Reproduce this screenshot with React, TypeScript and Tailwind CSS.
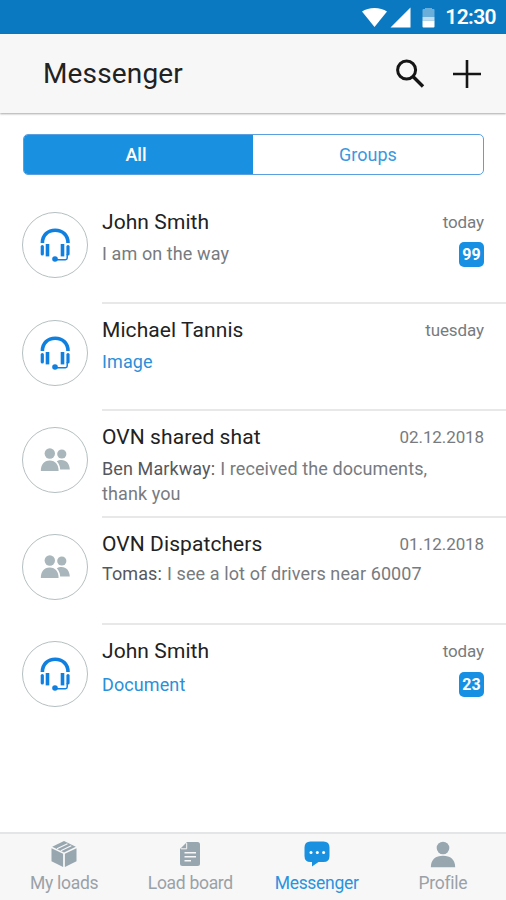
import clsx from "clsx";
import type { ReactNode } from "react";

interface IChat {
    name: string;
    date: string;
    sender?: string;
    text: string;
    text2?: string;
    link?: boolean;
    unread?: number;
    group?: boolean;
    textClass: string;
}

const chats: IChat[] = [
    { name: "John Smith", date: "today", text: "I am on the way", unread: 99, textClass: "mt-[5px]" },
    { name: "Michael Tannis", date: "tuesday", text: "Image", link: true, textClass: "mt-[5px]" },
    { name: "OVN shared shat", date: "02.12.2018", sender: "Ben Markway:", text: "I received the documents,", text2: "thank you", group: true, textClass: "mt-[5px]" },
    { name: "OVN Dispatchers", date: "01.12.2018", sender: "Tomas:", text: "I see a lot of drivers near 60007", group: true, textClass: "mt-[3px]" },
    { name: "John Smith", date: "today", text: "Document", link: true, unread: 23, textClass: "mt-[7px]" },
];

const HeadsetIcon = () => (
    <svg width="30" height="34" viewBox="0 0 30 34" fill="none" stroke="#0f7fe0">
        <path d="M2.400 15C2.400 7 8 2.300 15.200 2.300S28 7 28 15" strokeWidth="3.600" />
        <path d="M2.300 18.500v7.500" strokeWidth="3.200" strokeLinecap="round" />
        <path d="M7.500 16v12.400" strokeWidth="3.600" />
        <path d="M22.500 16v12.400" strokeWidth="3.600" />
        <path d="M28 18.500v7.500" strokeWidth="3.200" strokeLinecap="round" />
        <path d="M27.200 26v4q0 1.700-1.700 1.700H15" strokeWidth="1.500" />
        <circle cx="15" cy="31" r="2.800" fill="#0f7fe0" stroke="none" />
    </svg>
);

const GroupIcon = () => (
    <svg width="30" height="24" viewBox="0 0 30 24" fill="#a9b6bb">
        <circle cx="9.800" cy="5.500" r="5.200" />
        <circle cx="21.800" cy="6" r="4.600" />
        <path d="M.8 23c0-6 3-10.400 8.900-10.400S18.600 17 18.600 23z" />
        <path d="M16.800 13.300c1.300-.9 3-1.300 4.700-1.300 4.800 0 8.200 3.800 8.300 9.600h-9.600c-.2-3.400-1.300-6.200-3.400-8.300z" />
    </svg>
);

const SearchIcon = () => (
    <svg width="30" height="30" viewBox="0 0 30 30" fill="none" stroke="#151515">
        <circle cx="11.600" cy="11" r="9" strokeWidth="3" />
        <path d="M18 17.500l10 10" strokeWidth="3.400" />
    </svg>
);

const BoxIcon = () => (
    <svg width="26" height="28" viewBox="0 0 26 28" fill="#98a6b0">
        <path d="M13 1l11.800 5.800L13 12.500 1.200 6.800z" />
        <path d="M.5 8.300l11.600 5.500V27L.5 21.300z" />
        <path d="M25.500 8.300l-11.600 5.500V27l11.600-5.700z" />
        <path d="M6 8.700l10.500-5M9.800 10.700l10.500-5" stroke="#f7f7f7" strokeWidth="1.200" />
    </svg>
);

const DocIcon = () => (
    <svg width="22" height="26" viewBox="0 0 22 26" fill="#98a6b0">
        <path d="M8 1h10.500Q21 1 21 3.500v19q0 2.500-2.500 2.500h-15Q1 25 1 22.500V8z" />
        <path d="M7.700 2v5.800H2" fill="none" stroke="#f7f7f7" strokeWidth="1" />
        <path d="M5.500 11.700H17M5.500 15.700H17M5.500 19.800h6.500" stroke="#f7f7f7" strokeWidth="1.500" />
    </svg>
);

const BubbleIcon = () => (
    <svg width="26" height="26" viewBox="0 0 26 26" fill="#1a91e0">
        <path d="M6.500.500h13q6 0 6 6v8.500q0 6-6 6h-5L8 25.500V21H6.500q-6 0-6-6V6.500q0-6 6-6z" />
        <g fill="#fff">
            <circle cx="7" cy="11.500" r="1.500" />
            <circle cx="13.300" cy="11.500" r="1.500" />
            <circle cx="19.600" cy="11.500" r="1.500" />
        </g>
    </svg>
);

const ProfileIcon = () => (
    <svg width="26" height="27" viewBox="0 0 26 27" fill="#98a6b0">
        <circle cx="13" cy="7" r="6.300" />
        <path d="M.8 26.200C1 18.500 5.500 14.800 13 14.800s12 3.700 12.200 11.400z" />
    </svg>
);

const StatusBar = () => (
    <div className="flex h-[34px] items-center justify-end bg-[#0b79c1] pr-[10px] text-white">
        <svg width="78" height="22" viewBox="0 0 78 22" fill="#fff">
            <path d="M0 5.500C6.500.800 18.500.800 25 5.500L12.500 21z" />
            <path d="M48.500 1.500V21.500H28.500z" />
            <path d="M60.500 4q0-1 1-1h1.500V2h7v1h1.500q1 0 1 1v7h-12z" opacity=".4" />
            <path d="M60.500 11h12v3.500h-12z" opacity=".75" />
            <path d="M60.500 14.500h12V20.500q0 1-1 1h-10q-1 0-1-1z" />
        </svg>
        <span className="ml-[5px] text-[21px] leading-none font-semibold tracking-[-0.600px]">12:30</span>
    </div>
);

const ChatRow = ({ chat, first, last }: { chat: IChat; first: boolean; last: boolean }) => (
    <div className={clsx("flex pl-[22px]", first ? "h-[108px]" : "h-[107px]")}>
        <div className="mt-4 flex size-[66px] shrink-0 items-center justify-center rounded-full border-[1.500px] border-[#b6bfc1]">
            {chat.group ? <GroupIcon /> : <HeadsetIcon />}
        </div>
        <div className={clsx("ml-[14px] flex flex-1 justify-between pt-[13px] pr-[22px]", !last && "border-b-2 border-[#e8e8e8]")}>
            <div className="w-[345px]">
                <h2 className="text-[21px] leading-[27px] tracking-[0.080px] whitespace-nowrap text-[#222]">{chat.name}</h2>
                <div className={clsx("text-[18px] leading-[25px] tracking-[0.100px]", chat.link ? "text-[#2b8fd9]" : "text-[#777b80]", chat.textClass)}>
                    <div className="flex gap-[5px] whitespace-nowrap">
                        {chat.sender && <span className="text-[#55585c]">{chat.sender}</span>}
                        <span>{chat.text}</span>
                    </div>
                    {chat.text2 && <p>{chat.text2}</p>}
                </div>
            </div>
            <div className="flex w-0 flex-col items-end">
                <span className="text-[17px] leading-[27px] tracking-[-0.100px] whitespace-nowrap text-[#777b80]">{chat.date}</span>
                {chat.unread && (
                    <span className={clsx("flex size-[25px] items-center justify-center rounded-[5px] bg-[#178fe3] text-[16px] font-bold text-white", last ? "mt-[7px]" : "mt-[6px]")}>
                        {chat.unread}
                    </span>
                )}
            </div>
        </div>
    </div>
);

const NavItem = ({ label, icon, active }: { label: string; icon: ReactNode; active?: boolean }) => (
    <div className="flex w-1/4 flex-col items-center pt-[6px]">
        <div className="flex h-[28px] items-center">{icon}</div>
        <span className={clsx("mt-[3px] text-[17.500px] leading-[24px] tracking-[-0.300px] whitespace-nowrap", active ? "text-[#2b93de]" : "text-[#9aa1a7]")}>{label}</span>
    </div>
);

const App = () => {
    return (
        <div className="flex h-[900px] w-[506px] flex-col overflow-hidden bg-white font-['Roboto',sans-serif]">
            <StatusBar />
            <header className="flex h-[79px] shrink-0 items-center justify-between bg-[#f7f7f7] pr-[25px] pl-[43px] shadow-[0_1px_2px_rgba(0,0,0,0.350)]">
                <h1 className="text-[28px] leading-none tracking-[0.150px] text-[#222]">Messenger</h1>
                <div className="flex items-center gap-[28px]">
                    <SearchIcon />
                    <svg width="28" height="28" viewBox="0 0 28 28" stroke="#151515" strokeWidth="2.600">
                        <path d="M14 0v28M0 14h28" />
                    </svg>
                </div>
            </header>
            <div className="mr-[22px] ml-[23px] mt-[21px] mb-[21px] flex h-[41px] shrink-0 overflow-hidden rounded-[5px] border-[1.500px] border-[#5a9fe0] text-[18px]">
                <button className="w-[229px] bg-[#1a91e0] pr-[5px] font-medium text-white">All</button>
                <button className="flex-1 text-[#3b97de]">Groups</button>
            </div>
            <main className="flex-1">
                {chats.map((chat, i) => (
                    <ChatRow key={i} chat={chat} first={i === 0} last={i === chats.length - 1} />
                ))}
            </main>
            <nav className="flex h-[68px] shrink-0 border-t-2 border-[#e4e5e6] bg-[#f7f7f7] pl-px">
                <NavItem label="My loads" icon={<BoxIcon />} />
                <NavItem label="Load board" icon={<DocIcon />} />
                <NavItem label="Messenger" icon={<BubbleIcon />} active />
                <NavItem label="Profile" icon={<ProfileIcon />} />
            </nav>
        </div>
    );
};

export default App;
